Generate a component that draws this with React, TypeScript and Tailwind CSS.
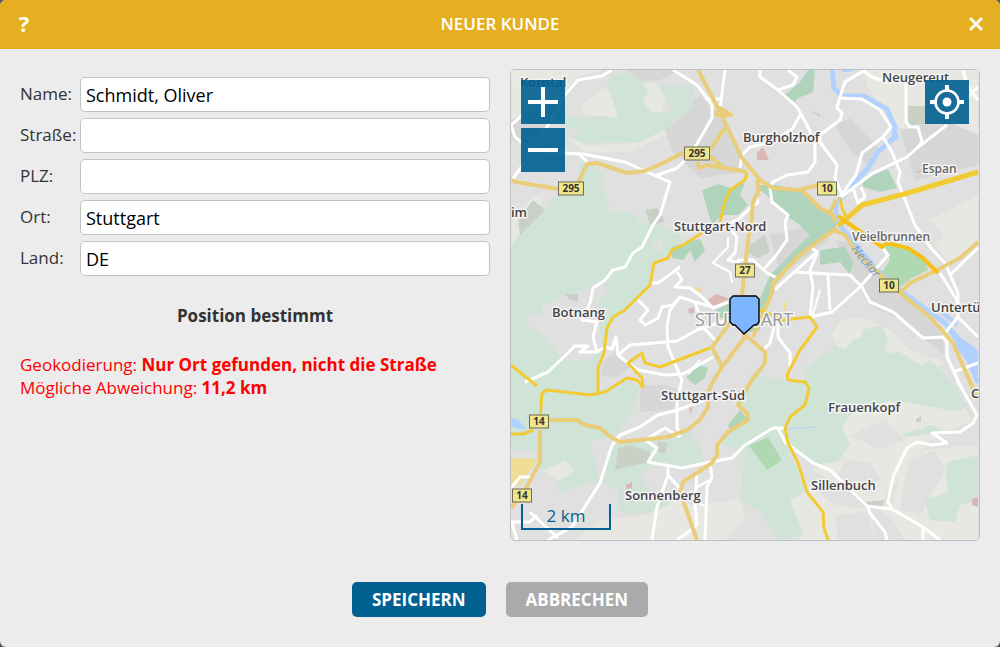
import { useState } from 'react'

type Customer = {
  name: string
  street: string
  zip: string
  city: string
  country: string
}

const fields: { key: keyof Customer; label: string }[] = [
  { key: 'name', label: 'Name:' },
  { key: 'street', label: 'Straße:' },
  { key: 'zip', label: 'PLZ:' },
  { key: 'city', label: 'Ort:' },
  { key: 'country', label: 'Land:' },
]

// Map layers, bottom to top
const beige = [
  'M511 70H605L578 76L560 96L535 112L511 122Z',
  'M580 105L605 88L618 92V117L585 115Z',
  'M645 85L655 82L665 98L662 112L648 112L642 100Z',
  'M568 137L590 128L580 146L640 143L680 120L672 112L665 135L630 152L585 152Z',
  'M511 222L530 200L545 192L530 240L511 245Z',
  'M577 220L605 215L601 228L583 232Z',
  'M862 70H978V140L950 135L925 142L895 125L880 105L870 92Z',
  'M930 220L978 195V245L950 265L935 245L945 235Z',
  'M840 320L862 318L890 330L910 350L945 362L930 375L845 360L832 335Z',
  'M835 410L900 390L960 400L972 420L930 440L905 470L885 495L895 520L850 490L812 470L840 450Z',
  'M900 470L925 450L978 445V540H905L890 515Z',
  'M790 500L810 485L835 505L870 510L875 540H800Z',
  'M575 540L600 520L650 515L672 490L690 505L740 500L745 520L725 540Z',
  'M540 470L580 455L586 465L560 480Z',
]

const suburb = [
  'M626 70H680L660 80L640 82Z',
  'M675 110L700 95L725 120L740 155L745 172L700 178L672 150L665 130Z',
  'M511 120L530 110L560 98L545 130L525 145L511 140Z',
  'M835 125L850 118L880 150L868 165L850 150Z',
  'M900 130L945 120L978 135V165L915 180Z',
  'M770 235L815 225L830 240L780 275Z',
  'M835 240L860 245L895 290L940 325L945 355L900 320L870 305L855 280Z',
  'M605 360L618 350L630 368L615 378L600 375Z',
  'M640 385H665L690 395L670 410L640 412Z',
]

const eastSuburb = [
  'M850 435L885 420L905 440L880 450Z',
  'M845 460L870 462L880 480L860 492L838 475Z',
  'M910 460L935 450L945 470L920 515L900 510L905 480Z',
  'M835 515L868 512L875 540H838Z',
]

const forest = [
  'M610 75L625 73L637 78L648 90L643 102L653 113L672 112L660 85L695 85L693 108L665 130L638 142L582 143L568 137L585 130L565 128V117H618L612 98L607 87Z',
  'M580 158L590 162L604 175L600 182L610 205L605 212L632 212L642 225L658 222L662 235L650 250L672 250L654 263L650 285L625 310L607 328L600 368L598 390L627 380L640 388L632 410L620 430L612 438L590 440L600 480L560 492L555 485L575 470L565 460L545 470L535 468V450H511V245L530 220L545 210L560 192L578 182Z',
  'M620 442L668 437L690 430L700 445L704 462L680 466L655 462L640 475L650 490L645 500L672 495L670 505L640 515L618 510V490L600 482L612 450Z',
  'M660 225L680 235L685 250L665 258Z',
  'M750 375L805 382L805 370L835 345L860 355L900 352L925 368L948 380L955 395L968 405L960 412L890 400L850 415L842 428L850 445L838 462L815 465L800 455L785 445L768 440L745 452L724 446L722 435L745 422L748 410L740 405Z',
  'M745 450L780 432L795 465L805 492L790 500L798 520L803 535L780 540L760 512L740 500Z',
  'M845 350L853 340L862 337V330L882 325L888 340L883 358L850 365Z',
  'M818 370L840 355L880 365L910 375L930 360L955 385L965 405L870 400L820 395Z',
  'M945 463L978 455V500L960 505L955 522L930 520L925 500L948 492Z',
  'M902 434L932 425L945 432L905 437Z',
]

const greySoft = [
  'M548 305L566 295L592 288L590 282L602 284L609 290L598 302L600 330L602 345L595 356L577 362L560 357L545 337L527 324V316L543 314L541 301Z',
]

const parks = [
  'M702 190L718 184L730 188L745 183L740 195L748 205L738 215L722 215L712 225L707 208Z',
  'M755 185L775 185L800 190L820 207L838 222L830 235L800 255L775 285L765 310L760 330L745 333L760 298L770 275L810 235L800 225L785 215L772 200Z',
  'M785 95L800 82L808 70H815L813 92L798 98L795 102Z',
  'M863 180L888 169L897 188L880 192L863 187Z',
  'M820 250L845 247L853 262L850 275L840 262L820 265Z',
  'M671 247L700 239L705 250L695 262L690 250L683 260L672 258Z',
  'M686 377L700 365L708 368L705 378L695 385Z',
  'M715 310L730 303V318L718 318Z',
  'M728 425L740 410L748 420L730 430Z',
]

const fairways = [
  'M885 245L908 248L925 260L928 270L912 278L900 287L880 275L890 260Z',
  'M749 446L768 437L782 460L767 470Z',
]

const woods = [
  'M518 220L533 200L545 210L520 235Z',
  'M645 210L658 208L665 222L650 225Z',
  'M908 106L925 106V124L908 126Z',
  'M750 245L765 235L770 252L758 258L748 253Z',
  'M618 448L630 445L650 452L650 462L630 466L615 470Z',
  'M565 294L578 294V302L570 300Z',
  'M866 502L885 500L882 508L865 505Z',
  'M916 419L921 416V422H916Z',
  'M810 111L820 114V117Z',
  'M657 441L667 443L666 454L658 452Z',
]

const pinks = [
  'M757 153L763 147L769 160H757Z',
  'M708 300L716 294L728 298L726 304L712 306Z',
  'M688 309L694 307V313L689 314Z',
  'M688 405L693 405L691 414Z',
  'M626 485L632 482V488L626 489Z',
  'M972 499L978 497V507L972 505Z',
  'M915 172L923 169L920 173Z',
]

const sands = [
  'M511 458L538 459L520 485L511 486Z',
  'M785 300L788 304L784 312L782 318Z',
  'M695 286L702 289L698 294Z',
]

const whiteRoads = [
  'M612 70L602 76L578 80L565 95L547 127L530 155L512 180',
  'M511 125L515 137L526 146L530 155L565 153L583 154L625 162L665 180L670 182L660 215L653 225L642 247L633 253L625 267L613 270L605 280L593 288L590 303L582 320L597 322L593 337L597 352L580 352L588 346L575 346L548 372L525 382',
  'M511 125L525 113L560 97',
  'M578 153L587 162M655 176L677 168L683 162L690 155L698 142L712 118V105L697 85L673 70',
  'M725 70L723 85L720 110M708 99H720',
  'M760 70V77L778 90L797 107L807 125L815 142V162L808 172L787 175L773 182L770 188L772 202L788 215L785 222L787 240L775 257L763 270',
  'M778 90L793 85L797 77L788 70',
  'M800 115L793 128L773 142L750 147L742 155L740 168',
  'M757 198L758 203L750 208L740 218L727 225L737 237L735 253L728 260L740 263',
  'M865 70L845 82L840 97L837 108L842 113L840 120L820 135L820 142L837 165L835 178L842 195',
  'M840 98L862 99L880 110L891 127L883 137L862 153L856 175L840 197',
  'M883 137L892 152L900 172L898 182L915 225L930 247L945 263L958 293V317L978 337',
  'M863 70L872 77L887 82M906 84V122L910 127H918L922 142L917 148',
  'M947 125L917 148L907 157L873 173L853 188L840 198M853 188L858 203L865 197L861 187',
  'M963 70L967 85L978 100M978 87L968 97',
  'M597 352L605 347L612 349L616 337L618 355L630 345L665 342L677 341L697 330L727 320',
  'M618 355L628 363L638 370L665 375L683 374L713 357',
  'M638 300L648 310L640 320L645 325L658 318L662 307L672 305L680 297L695 302L713 307',
  'M650 283H658L665 278L680 267M677 272L682 280L675 287L690 288L702 297L713 308L728 302',
  'M680 297L670 310L667 327L668 347L682 380L677 400V427L680 437',
  'M695 302L703 327L715 340',
  'M737 260H753L767 273L777 278M812 248L817 252L783 282L775 290',
  'M817 253L810 270L813 287L810 317L832 312L860 287L888 255L880 245',
  'M793 272L850 275L862 287L870 302L893 312L923 338L943 337L947 342V357L960 385M828 275L830 310',
  'M957 380L977 415L973 423L960 432L932 433L947 443L932 445L917 442L907 448L893 477L888 502L892 508',
  'M940 273L957 300L958 317L945 333M978 248L950 275M953 372L978 363',
  'M778 323V337L790 353V367M775 323L770 343L763 350',
  'M548 540L572 527L600 483L612 445L620 435L638 428L658 415L678 410L705 400',
  'M645 440L657 448L648 462L682 468L705 463L732 458L745 445L773 428H785M645 440L665 428L680 437',
  'M778 428L785 442L813 463L830 470L867 506L892 509L923 527L940 540M868 507L870 513L885 532L887 540M923 527V540',
  'M668 467V475L657 507L652 540M668 475L683 492',
  'M710 463L712 477L707 487L705 540M697 470L695 505L697 525L687 533L677 540',
  'M530 512L558 538M511 488L520 477H530M511 520L517 540M511 522H530L537 515',
]

const thinRoads = [
  'M728 237V247L713 263L730 272L732 283',
  'M695 488L710 480M695 502L708 507',
  'M820 290L812 318M688 374L700 360',
]

const secondaryRoads = [
  'M511 180L516 182L558 189M577 185L587 164L597 163L627 173L645 171L665 162L685 152',
  'M698 70L720 112L742 158L760 180L773 188L798 190L820 185',
  'M716 116L720 108L731 115H716',
  'M725 128L710 150M697 162L700 168L707 165L747 172M710 156L722 166',
  'M757 180L759 190L753 202L751 225L748 240L742 295',
  'M802 190L820 208L835 216M837 228L820 240L800 255L773 283L772 293L753 337',
  'M730 323L712 347L722 367L745 337M722 367L712 383L708 393V407L700 420L687 430L668 437L620 442L612 438L600 428L585 425L577 420H548',
  'M743 333L765 352V363L752 380L746 390L738 405L747 413L748 420L728 432L717 445V455L712 463L683 482L680 492L697 540',
  'M540 430V462L525 490L511 508',
  'M833 230L845 235L857 253L900 293L930 317L953 343L978 400',
  'M900 293L910 283L937 270L960 258L978 242M836 200L830 212L836 222',
]

const primaryRoads = [
  'M747 173L745 180L730 190L725 202L720 222M702 233L683 245L672 250L668 258L654 263L650 285L625 310L613 317L607 328L604 353L598 368V393',
  'M511 365L537 386M540 420L542 393L547 390L590 395L605 392L627 378L637 380L643 387L642 378L628 363L642 353L645 363L660 367L710 348',
  'M511 434H523L533 430',
  'M760 310L783 320L810 317L817 327L800 350L787 375L788 380L805 382L809 388L805 405L790 417L785 428L788 443L798 463L807 492L823 512L824 528L828 540',
  'M840 197L842 208L847 219',
]

const shields = [
  { x: 697, y: 153, text: '295' },
  { x: 571, y: 188, text: '295' },
  { x: 827, y: 188, text: '10' },
  { x: 745, y: 270, text: '27' },
  { x: 889, y: 285, text: '10' },
  { x: 539, y: 421, text: '14' },
  { x: 522, y: 495, text: '14' },
]

const places = [
  { x: 520, y: 87, text: 'Korntal' },
  { x: 882, y: 82, text: 'Neugereut' },
  { x: 743, y: 142, text: 'Burgholzhof' },
  { x: 922, y: 173, text: 'Espan', minor: true },
  { x: 511, y: 217, text: 'im' },
  { x: 674, y: 231, text: 'Stuttgart-Nord' },
  { x: 852, y: 241, text: 'Veielbrunnen', minor: true },
  { x: 552, y: 317, text: 'Botnang' },
  { x: 931, y: 312, text: 'Untertü' },
  { x: 661, y: 400, text: 'Stuttgart-Süd' },
  { x: 828, y: 412, text: 'Frauenkopf' },
  { x: 971, y: 398, text: 'C' },
  { x: 811, y: 490, text: 'Sillenbuch' },
  { x: 625, y: 500, text: 'Sonnenberg' },
]

const Areas = ({ shapes, fill }: { shapes: string[]; fill: string }) => (
  <g fill={fill}>
    {shapes.map((d) => (
      <path key={d} d={d} />
    ))}
  </g>
)

const Lines = ({ lines, stroke, width }: { lines: string[]; stroke: string; width: number }) => (
  <g fill="none" stroke={stroke} strokeWidth={width} strokeLinejoin="round">
    {lines.map((d) => (
      <path key={d} d={d} />
    ))}
  </g>
)

const CityMap = () => (
  <svg
    viewBox="511 70 468 470"
    preserveAspectRatio="xMidYMid slice"
    className="block h-[470px] w-full"
    role="img"
    aria-label="Karte von Stuttgart"
  >
    <rect x="0" y="0" width="1500" height="700" fill="#e0e0e0" />
    <Areas shapes={beige} fill="#e8e8e2" />
    <Areas shapes={suburb} fill="#d6d6d6" />
    <Areas shapes={eastSuburb} fill="#e0e0e0" />
    <Areas shapes={forest} fill="#d0e3d7" />
    <Areas shapes={greySoft} fill="#e0e0e0" />
    <Areas shapes={parks} fill="#afd4bb" />
    <Areas shapes={fairways} fill="#aed9b1" />
    <Areas shapes={woods} fill="#c9d1c7" />
    <Areas shapes={pinks} fill="#dbb6b5" />
    <Areas shapes={sands} fill="#f0dc94" />

    {/* Neckar */}
    <g fill="none" stroke="#b1d1ff" strokeLinejoin="round">
      <path
        strokeWidth="5"
        d="M832 70L834 88L842 96L863 96L887 109L895 127L894 138L878 152L868 168L850 188L836 204L836 220L842 228L863 255L887 280L913 300L945 323L962 343L978 358"
      />
      <path strokeWidth="4" d="M842 70H852M893 125L897 139M955 342L968 360L978 383M942 312L957 325" />
      <path strokeWidth="1" d="M785 429L817 427" />
    </g>
    <path fill="#b1d1ff" d="M511 418L519 420L526 430L511 427ZM945 326L978 350V380L960 350Z" />

    <Lines lines={thinRoads} stroke="#fff" width={2} />
    <Lines lines={whiteRoads} stroke="#fff" width={3} />
    <Lines lines={secondaryRoads} stroke="#e9cd79" width={4} />
    <Lines lines={primaryRoads} stroke="#f2cb33" width={3} />
    <path d="M838 226L862 205L908 193L978 172" fill="none" stroke="#f2cb33" strokeWidth="5" />
    <path
      d="M838 216L845 221L882 247L887 243L908 248L923 258L938 273"
      fill="none"
      stroke="#f7bf12"
      strokeWidth="4"
    />

    <g fontFamily="'Open Sans', 'Noto Sans', sans-serif">
      {shields.map(({ x, y, text }) => {
        const w = text.length * 6 + 7
        return (
          <g key={`${x}-${y}`}>
            <rect x={x - w / 2} y={y - 6} width={w} height="13" fill="#efe58a" stroke="#6c6a55" />
            <text x={x} y={y + 4} fontSize="10" fontWeight="700" fill="#333" textAnchor="middle">
              {text}
            </text>
          </g>
        )
      })}
      <g strokeWidth="3" stroke="#f4f4f4" strokeLinejoin="round" paintOrder="stroke">
        <text x="744" y="326" fontSize="18" fontWeight="500" fill="#969696" textAnchor="middle">
          STUTTGART
        </text>
        {places.map(({ x, y, text, minor }) => (
          <text
            key={text}
            x={x}
            y={y}
            fontSize={minor ? 12 : 13}
            fontWeight="600"
            fill={minor ? '#666' : '#444'}
          >
            {text}
          </text>
        ))}
      </g>
      <text
        x="846"
        y="266"
        fontSize="12"
        fontStyle="italic"
        fill="#6f9bd2"
        transform="rotate(50 866 263)"
      >
        Neckar
      </text>
    </g>

    {/* Customer marker */}
    <path
      d="M733 296H756L759 299V322L756 325H754L744 334L735 325H733L730 322V299Z"
      fill="#7db6ff"
      stroke="#000"
      strokeWidth="1.4"
      strokeLinejoin="round"
    />
  </svg>
)

const mapButton = 'flex size-11 items-center justify-center bg-[#006090]/90 text-white'

const App = () => {
  const [customer, setCustomer] = useState<Customer>({
    name: 'Schmidt, Oliver',
    street: '',
    zip: '',
    city: 'Stuttgart',
    country: 'DE',
  })

  return (
    <div className="min-h-screen bg-[#555]">
      <div
        role="dialog"
        aria-labelledby="dialog-title"
        className="flex min-h-screen flex-col overflow-hidden rounded-md bg-[#ececec] font-['Open_Sans','Noto_Sans',sans-serif] text-[17px] leading-[23px] text-[#333]"
      >
        <header className="flex h-[49px] items-center justify-between bg-[#e5af21] px-4 pb-0.5 text-white">
          <button type="button" aria-label="Hilfe" className="w-4 text-[22px] font-bold">
            ?
          </button>
          <h1 id="dialog-title" className="font-semibold">
            NEUER KUNDE
          </h1>
          <button type="button" aria-label="Schließen" className="flex w-4 justify-center">
            <svg viewBox="0 0 14 14" className="size-3.5 shrink-0" stroke="currentColor" strokeWidth="2.6">
              <path d="M1 1L13 13M13 1L1 13" />
            </svg>
          </button>
        </header>

        <main className="grid grid-cols-2 gap-5 px-5 pt-5">
          <form id="customer-form" className="pt-2" onSubmit={(e) => e.preventDefault()}>
            <div className="flex flex-col gap-1.5">
              {fields.map(({ key, label }) => (
                <div key={key} className="flex items-center">
                  <label htmlFor={key} className="w-15 shrink-0 pb-0.5">
                    {label}
                  </label>
                  <input
                    id={key}
                    type="text"
                    value={customer[key]}
                    onChange={(e) => setCustomer({ ...customer, [key]: e.target.value })}
                    className="h-[35px] min-w-0 flex-1 rounded-[5px] border border-[#c0c4c4] bg-white px-[5px] pt-px text-lg text-black"
                  />
                </div>
              ))}
            </div>
            <p className="mt-7 text-center font-bold">Position bestimmt</p>
            <div className="mt-[26px] text-[#f00]">
              <p>
                Geokodierung: <strong>Nur Ort gefunden, nicht die Straße</strong>
              </p>
              <p>
                Mögliche Abweichung: <strong>11,2 km</strong>
              </p>
            </div>
          </form>

          <section className="relative overflow-hidden rounded-[5px] border border-[#bcbfc4]">
            <CityMap />
            <div className="absolute top-2.5 left-2.5 flex flex-col gap-1">
              <button type="button" aria-label="Vergrößern" className={mapButton}>
                <svg viewBox="0 0 30 30" className="size-[30px]" stroke="currentColor" strokeWidth="4">
                  <path d="M0 15H30M15 0V30" />
                </svg>
              </button>
              <button type="button" aria-label="Verkleinern" className={mapButton}>
                <svg viewBox="0 0 30 30" className="size-[30px]" stroke="currentColor" strokeWidth="4">
                  <path d="M0 15H30" />
                </svg>
              </button>
            </div>
            <button type="button" aria-label="Zentrieren" className={`absolute top-2.5 right-2.5 ${mapButton}`}>
              <svg viewBox="0 0 34 34" className="size-[34px]" fill="none" stroke="currentColor">
                <circle cx="17" cy="17" r="11.5" strokeWidth="2.6" />
                <circle cx="17" cy="17" r="4.5" fill="currentColor" stroke="none" />
                <path strokeWidth="4" d="M17 0V7M17 27V34M0 17H7M27 17H34" />
              </svg>
            </button>
            <div className="absolute bottom-2.5 left-2.5 h-[26px] w-[90px] border-2 border-t-0 border-[#006090] text-center leading-6 text-[#006090]">
              2 km
            </div>
          </section>
        </main>

        <footer className="mt-auto flex justify-center gap-5 pt-5 pb-[30px] font-bold text-white">
          <button type="submit" form="customer-form" className="h-[35px] rounded-[5px] bg-[#006090] px-5">
            SPEICHERN
          </button>
          <button type="button" className="h-[35px] rounded-[5px] bg-[#aaa] px-5">
            ABBRECHEN
          </button>
        </footer>
      </div>
    </div>
  )
}

export default App
